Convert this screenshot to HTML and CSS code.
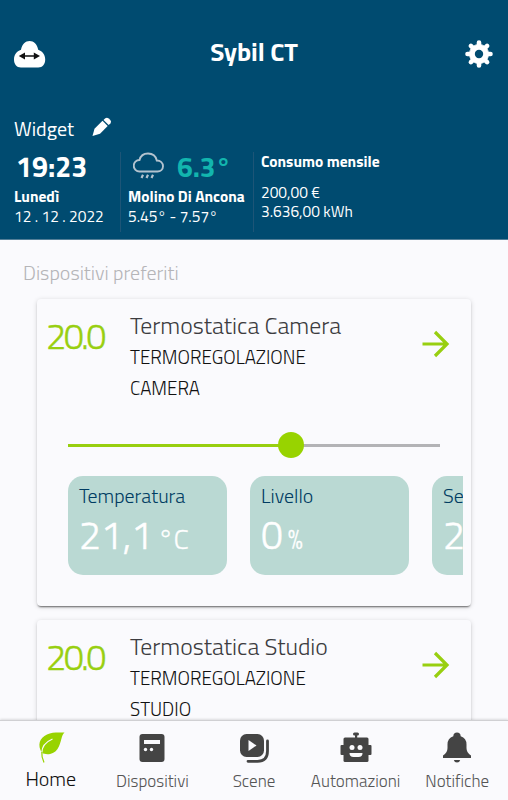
FILE: index.html
```html
<!DOCTYPE html>
<html lang="it">
    <head>
        <title>Sybil CT</title>
        <meta charset="UTF-8">
        <meta name="viewport" content="width=device-width">
        <link rel="stylesheet" href="styles.css">
    </head>
    <body>
        <div id="app">
            <header class="header">
                <div class="topbar">
                    <svg class="cloud" width="32" height="28" viewBox="0 0 32 28">
                        <path fill="#fff" d="M7 27.500C2.500 27.500 0 24 0 19.500C0 15 2.500 11.300 7 9.800C8 4 11.500 1 15.600 1C19.700 1 23.200 4 24.200 9.800C28.700 11.300 31.200 15 31.200 19.500C31.200 24 28.700 27.500 24.200 27.500Z"/>
                        <path fill="#111" d="M4.800 16L11 12.500V15.300H19.800V12.500L26 16L19.800 19.500V16.700H11V19.500Z"/>
                    </svg>
                    <h1>Sybil CT</h1>
                    <svg class="gear" width="28" height="28" viewBox="0 0 28 28">
                        <g fill="#fff" stroke="#fff">
                            <path fill="none" stroke-width="4.600" stroke-linecap="round" d="M14 2.500V25.500M2.500 14H25.500M5.900 5.900L22.100 22.100M22.100 5.900L5.900 22.100"/>
                            <circle cx="14" cy="14" r="9.500"/>
                        </g>
                        <circle cx="14" cy="14" r="4.200" fill="#004b70"/>
                    </svg>
                </div>
                <div class="widget-title">
                    <span>Widget</span>
                    <svg width="20" height="20" viewBox="0 0 20 20" fill="#fff">
                        <path d="M0.500 19L2.500 11.700L10.500 3.800L15.700 9L8 16.800Z"/>
                        <path d="M11.500 2.900L13.300 1.200Q15 0 16.700 1.500L18.300 3.100Q19.800 4.900 18.400 6.500L16.700 8.100Z"/>
                    </svg>
                </div>
                <div class="widgets">
                    <div class="widget clock">
                        <b class="time">19:23</b>
                        <b class="day">Lunedì</b>
                        <span class="date">12 . 12 . 2022</span>
                    </div>
                    <div class="widget weather">
                        <div class="now">
                            <svg width="32" height="28" viewBox="0 0 32 28" fill="none" stroke="#b3c3cf" stroke-width="1.900">
                                <path d="M6.500 19.500A5.700 5.700 0 0 1 6.500 8C7.500 4 11 1.500 15 1.500C19.500 1.500 22.800 4 23.800 8.500C27.500 8.500 30 11 30 14.300C30 17.500 27.500 19.500 24.500 19.500Z"/>
                                <path stroke-width="2.200" d="M10 22.800L8.500 26M15 22.800L13.500 26M20 22.800L18.500 26"/>
                            </svg>
                            <b>6.3°</b>
                        </div>
                        <b class="place">Molino Di Ancona</b>
                        <span class="range">5.45° - 7.57°</span>
                    </div>
                    <div class="widget usage">
                        <b>Consumo mensile</b>
                        <span>200,00 €</span>
                        <span class="kwh">3.636,00 kWh</span>
                    </div>
                </div>
            </header>

            <main>
                <h2>Dispositivi preferiti</h2>
                <div class="card">
                    <div class="card-head">
                        <span class="setpoint">20.0</span>
                        <div class="info">
                            <h3>Termostatica Camera</h3>
                            <p class="kind">TERMOREGOLAZIONE</p>
                            <p class="room">CAMERA</p>
                        </div>
                        <svg class="arrow" width="28" height="28" viewBox="0 0 28 28" fill="none" stroke="#98cf10" stroke-width="3.200">
                            <path d="M0.500 14H25M13 2L25 14L13 26"/>
                        </svg>
                    </div>
                    <div class="slider"><div class="fill"></div><div class="thumb"></div></div>
                    <div class="chips">
                        <div class="chip">
                            <span class="label">Temperatura</span>
                            <div class="value"><span class="num">21,1</span><span class="unit">°C</span></div>
                        </div>
                        <div class="chip">
                            <span class="label">Livello</span>
                            <div class="value"><span class="num">0</span><span class="unit percent">%</span></div>
                        </div>
                        <div class="chip">
                            <span class="label">Setpoint</span>
                            <div class="value"><span class="num">20</span></div>
                        </div>
                    </div>
                </div>
                <div class="card">
                    <div class="card-head">
                        <span class="setpoint">20.0</span>
                        <div class="info">
                            <h3>Termostatica Studio</h3>
                            <p class="kind">TERMOREGOLAZIONE</p>
                            <p class="room">STUDIO</p>
                        </div>
                        <svg class="arrow" width="28" height="28" viewBox="0 0 28 28" fill="none" stroke="#98cf10" stroke-width="3.200">
                            <path d="M0.500 14H25M13 2L25 14L13 26"/>
                        </svg>
                    </div>
                </div>
            </main>

            <nav>
                <a class="active">
                    <svg width="32" height="32" viewBox="0 0 32 32">
                        <path fill="#98d300" d="M29.500 1.500C26 4 27 11 22.500 18C18.500 24 11 24 7 22C2 14 4.500 7 12 3.500C17 1 23 1.500 29.500 1.500Z"/>
                        <path fill="none" stroke="#fafafd" stroke-width="1.200" d="M17.500 8C10.500 11 6.800 16 6.800 22"/>
                        <path fill="none" stroke="#98d300" stroke-width="1.200" d="M6.800 21C6.500 25 7.500 28.500 9 31.500"/>
                    </svg>
                    <span>Home</span>
                </a>
                <a>
                    <svg width="32" height="32" viewBox="0 0 32 32">
                        <rect x="3.500" y="3" width="25" height="28" rx="3" fill="#444"/>
                        <g fill="#fafafd"><rect x="8" y="9" width="16" height="4"/><circle cx="9.500" cy="18.500" r="1.700"/><circle cx="15.500" cy="18.500" r="1.700"/></g>
                    </svg>
                    <span>Dispositivi</span>
                </a>
                <a>
                    <svg width="32" height="32" viewBox="0 0 32 32">
                        <rect x="2" y="3" width="24" height="23" rx="6.500" fill="#444"/>
                        <path fill="#fafafd" d="M10.500 9V20L18.500 14.500Z"/>
                        <path fill="none" stroke="#444" stroke-width="2.800" stroke-linecap="round" d="M29.500 10V20Q29.500 30.300 19.500 30.300H10"/>
                    </svg>
                    <span>Scene</span>
                </a>
                <a>
                    <svg width="32" height="32" viewBox="0 0 32 32">
                        <g fill="#444">
                            <rect x="13" y="1.500" width="6" height="3" rx="1.500"/><rect x="15" y="2" width="2.200" height="6"/>
                            <rect x="3.500" y="6.500" width="25" height="24.500" rx="1.500"/><rect x="0.500" y="14" width="31" height="10" rx="1"/>
                        </g>
                        <circle cx="12" cy="16.500" r="2.500" fill="#fafafd"/><circle cx="20" cy="16.500" r="2.500" fill="#fafafd"/>
                        <path fill="#fafafd" d="M9.500 22H22.500Q22.500 26 18.500 26H13.500Q9.500 26 9.500 22Z"/>
                    </svg>
                    <span>Automazioni</span>
                </a>
                <a>
                    <svg width="32" height="32" viewBox="0 0 32 32" fill="#444">
                        <path d="M2 27V24.500Q6.500 22 6.500 17V13.500Q6.500 7 12.300 5.200Q12.500 1.500 16 1.500T19.700 5.200Q25.500 7 25.500 13.500V17Q25.500 22 30 24.500V27Z"/>
                        <path d="M12.800 29H19.200Q18.500 31.500 16 31.500T12.800 29Z"/>
                    </svg>
                    <span>Notifiche</span>
                </a>
            </nav>
        </div>
    </body>
</html>
```

FILE: styles.css
```css
* {
    box-sizing: border-box;
}
body {
    margin: 0;
    font-family: "Titillium Web", "Noto Sans", sans-serif;
    background-color: #fafafd;
}
h1, h2, h3, p {
    margin: 0;
    font-weight: 400;
}
svg {
    display: block;
    flex: none;
}
#app {
    display: flex;
    flex-direction: column;
    width: 508px;
    height: 800px;
    overflow: hidden;
    white-space: nowrap;
}

/* header */
.header {
    flex: none;
    height: 240px;
    padding: 0 15px 0 14px;
    background-color: #004b70;
    border-bottom: 1px solid #537f98;
    color: #fff;
}
.topbar {
    display: flex;
    justify-content: space-between;
    align-items: center;
    height: 108px;
}
.topbar h1 {
    font-size: 26px;
    font-weight: 700;
    line-height: 34px;
    letter-spacing: -0.100px;
    margin: -4px 3px 0 0;
}
.widget-title {
    display: flex;
    gap: 18px;
    height: 44px;
    font-size: 20px;
    line-height: 41px;
}
.widget-title svg {
    margin-top: 9px;
}
.widgets {
    display: flex;
    height: 80px;
}
.widget {
    display: flex;
    flex-direction: column;
    border-right: 1px solid #1d5577;
    font-size: 15.500px;
    line-height: 20px;
}
.clock {
    width: 107px;
}
.time {
    height: 34px;
    padding-left: 2px;
    font-size: 28.500px;
    line-height: 30px;
}
.day, .place {
    line-height: 21px;
}
.date, .range {
    line-height: 18px;
}
.weather {
    width: 133px;
    padding-left: 7px;
}
.now {
    display: flex;
    gap: 12px;
    height: 34px;
    padding-left: 5px;
    color: #12b5ae;
    font-size: 28px;
    line-height: 30px;
}
.usage {
    border: 0;
    padding-left: 7px;
}
.usage b {
    height: 31px;
    line-height: 18px;
}
.usage span {
    line-height: 19px;
}

/* favourite devices */
main {
    flex: 1;
    min-height: 0;
    overflow: hidden;
    padding: 20px 37px 0;
}
h2 {
    height: 39px;
    margin-left: -14px;
    color: #b5b5b8;
    font-size: 20px;
    font-weight: 300;
    line-height: 25px;
}
.card {
    height: 307px;
    margin-bottom: 14px;
    border-radius: 4px;
    background-color: #fafafd;
    box-shadow: 0 2px 2px -1px rgba(0,0,0,0.550), 0 1px 5px rgba(0,0,0,0.160);
}
.card-head {
    display: flex;
    height: 133px;
    padding: 12px 21px 0 9px;
}
.setpoint {
    width: 84px;
    color: #98cf10;
    font-size: 36px;
    font-weight: 300;
    line-height: 50px;
    letter-spacing: -2.500px;
    -webkit-text-stroke: 0.400px #98cf10;
}
.info {
    flex: 1;
}
h3 {
    height: 31px;
    color: #3c3c40;
    font-size: 23.800px;
    font-weight: 300;
    line-height: 28px;
}
.info p {
    color: #111;
    font-size: 18.800px;
    font-weight: 300;
    line-height: 31px;
}
.arrow {
    margin-top: 19px;
}
.slider {
    position: relative;
    height: 26px;
    margin: 0 31px;
    background: linear-gradient(#b3b3b6, #b3b3b6) center / 100% 3px no-repeat;
}
.fill {
    position: absolute;
    top: 11.500px;
    width: 60%;
    height: 3px;
    background-color: #98cf10;
}
.thumb {
    position: absolute;
    left: calc(60% - 13px);
    width: 26px;
    height: 26px;
    border-radius: 50%;
    background-color: #98d300;
}
.chips {
    display: flex;
    gap: 23px;
    margin: 18px 8px 0 31px;
    overflow: hidden;
}
.chip {
    flex: none;
    width: 159px;
    height: 99px;
    padding: 6px 11px;
    border-radius: 15px;
    background-color: #bad9d3;
}
.label {
    display: block;
    color: #003c62;
    font-size: 19.900px;
    font-weight: 300;
    line-height: 28px;
}
.value {
    display: flex;
    align-items: baseline;
    gap: 5px;
    color: #fff;
    line-height: 49px;
}
.num {
    font-size: 39px;
    font-weight: 300;
    -webkit-text-stroke: 0.500px #fff;
}
.unit {
    font-size: 28px;
    font-weight: 300;
    -webkit-text-stroke: 0.300px #fff;
}
.percent {
    font-size: 27px;
}

/* bottom navigation */
nav {
    display: flex;
    flex: none;
    height: 80px;
    z-index: 1;
    border-top: 1px solid #d0d0d3;
    background-color: #fafafd;
    box-shadow: 0 -1px 2px rgba(0,0,0,0.120);
}
nav a {
    display: flex;
    flex: 1 1 0;
    flex-direction: column;
    align-items: center;
    padding-top: 10px;
    color: #555;
    font-size: 17px;
    font-weight: 300;
}
nav span {
    margin-top: 6px;
    line-height: 24px;
}
nav .active {
    color: #111;
    font-size: 20px;
}
.active span {
    margin-top: 4px;
}
```
